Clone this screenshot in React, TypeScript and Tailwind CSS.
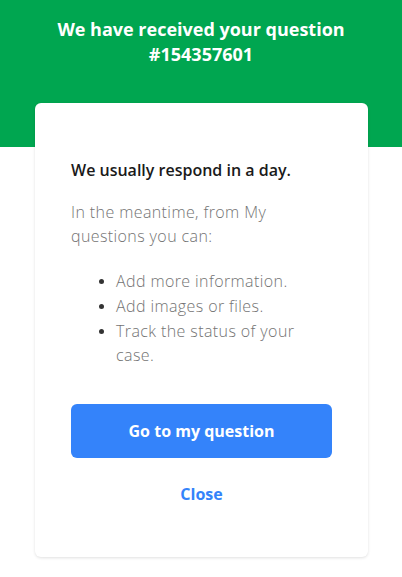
export default function App() {
  return (
    <div
      className="relative min-h-[577px] w-full bg-white"
      style={{ fontFamily: "'Open Sans', 'Noto Sans', sans-serif" }}
    >
      <div className="h-[147px] bg-[#00a650] px-6 pt-[17px] text-center">
        <h1 className="text-[18px] font-bold leading-[25px] text-white">
          We have received your question
          <br />
          #154357601
        </h1>
      </div>
      <div className="-mt-[44px] px-[35px]">
        <div className="mx-auto w-[333px] rounded-md bg-white px-[36px] pb-[45px] pt-[55px] shadow-[0_1px_3px_rgba(0,0,0,0.12)]">
          <p className="text-[16px] font-semibold leading-[24px] text-[#1a1a1a]">
            We usually respond in a day.
          </p>
          <p className="mt-[18px] max-w-[220px] text-[16px] font-light leading-[24px] tracking-[0.4px] text-[#737373]">
            In the meantime, from My questions you can:
          </p>
          <ul className="mt-[21px] flex flex-col gap-[1px] pl-[45px] pr-[20px] text-[16px] font-light leading-[24px] tracking-[0.4px] text-[#737373]">
            {["Add more information.", "Add images or files.", "Track the status of your case."].map((item) => (
              <li key={item} className="relative">
                <span className="absolute -left-[17px] top-[10px] h-[5px] w-[5px] rounded-full bg-[#333]" />
                {item}
              </li>
            ))}
          </ul>
          <button className="mt-[37px] h-[54px] w-full rounded-md bg-[#3483fa] text-[16px] font-bold text-white">
            Go to my question
          </button>
          <button className="mt-[18px] block h-[36px] w-full text-[16px] font-bold text-[#3483fa]">
            Close
          </button>
        </div>
      </div>
    </div>
  );
}
